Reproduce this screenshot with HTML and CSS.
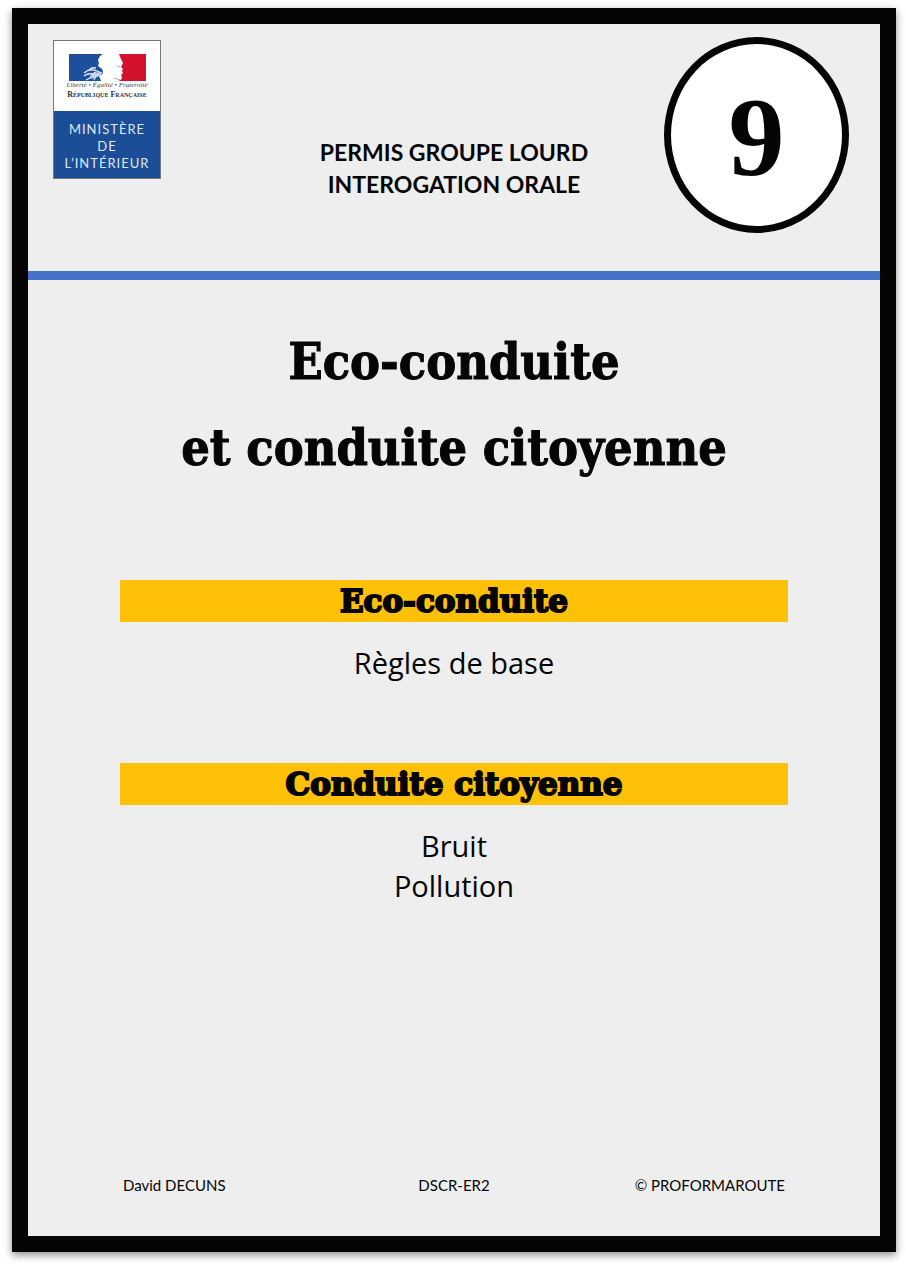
FILE: index.html
```html
<!DOCTYPE html>
<html lang="fr">
<head>
<meta charset="utf-8">
<meta name="viewport" content="width=device-width, initial-scale=1">
<title>Eco-conduite et conduite citoyenne</title>
<link rel="stylesheet" href="styles.css">
</head>
<body>
<article class="sheet">
  <header class="header">
    <div class="logo">
      <div class="republic">
        <svg class="flag" viewBox="0 0 77 27" aria-hidden="true">
          <path fill="#1e4f9c" d="M0 0H34L31 2 29 6 30 9 29 12 33 15 34 18 33 21 30 22 32 27H0Z"/>
          <path fill="#d3122e" d="M50 0H77V27H49Q53 26 53 23L52 21 54 19 53 17 54 15 52 13 54 9 52 5Z"/>
          <path fill="none" stroke="#dfe9f7" stroke-width="1.3" d="M15 19Q19 15 25 16L33 19M20 16Q23 13 27 14M15 22Q19 19 23 20M27 18Q22 20 21 24L17 26M28 20L25 26"/>
          <path fill="#c5d5eb" d="M23 19L31 18 33 21 28 23 22 25Z"/>
          <path fill="none" stroke="#aaa" stroke-width="1" d="M45 24L51 26M48 12L51 13"/>
        </svg>
        <div class="motto">Liberté • Égalité • Fraternité</div>
        <div class="name">République Française</div>
      </div>
      <div class="ministry">MINISTÈRE<br>DE<br>L’INTÉRIEUR</div>
    </div>
    <p class="exam">PERMIS GROUPE LOURD<br>INTEROGATION ORALE</p>
    <div class="number">9</div>
  </header>
  <main class="content">
    <h1 class="title">Eco-conduite<br>et conduite citoyenne</h1>
    <section class="topic">
      <h2 class="band">Eco-conduite</h2>
      <p class="points">Règles de base</p>
    </section>
    <section class="topic">
      <h2 class="band">Conduite citoyenne</h2>
      <p class="points">Bruit<br>Pollution</p>
    </section>
  </main>
  <footer class="footer">
    <span>David DECUNS</span>
    <span class="code">DSCR-ER2</span>
    <span class="owner">© PROFORMAROUTE</span>
  </footer>
</article>
</body>
</html>
```
FILE: styles.css
```css
* { box-sizing: border-box; }
body {
  margin: 0;
  padding: 8px 10px 14px 12px;
  min-height: 100vh;
  display: flex;
  background: #fff;
  color: #050505;
  font-family: Lato, "Liberation Sans", sans-serif;
}
h1, h2, p { margin: 0; }
.sheet {
  flex: 1;
  display: flex;
  flex-direction: column;
  border: 16px solid #050505;
  background: #eee;
  box-shadow: 0 3px 8px rgba(0, 0, 0, .45);
}
.header {
  display: grid;
  grid-template-columns: 1fr auto 1fr;
  align-items: start;
  padding: 13px 31px 38px 25px;
  border-bottom: 9px solid #4673c8;
}
.logo {
  width: 108px;
  margin-top: 3px;
  border: 1px solid #777;
  background: #fff;
  text-align: center;
}
.republic { height: 70px; padding-top: 13px; }
.flag { display: block; width: 77px; height: 27px; margin: 0 auto; }
.motto {
  font: italic 7px/9px "Liberation Serif", serif;
  color: #444;
  white-space: nowrap;
}
.name {
  font: bold 8px/10px "Liberation Serif", serif;
  font-variant: small-caps;
  color: #333;
  white-space: nowrap;
}
.ministry {
  padding: 10px 0 6px;
  background: #1c4d97;
  color: #dfe8f5;
  font-size: 13px;
  line-height: 17px;
  letter-spacing: 1px;
}
.exam {
  padding: 99px 0 0 6px;
  text-align: center;
  font-size: 23px;
  font-weight: bold;
  line-height: 32px;
}
.number {
  justify-self: end;
  display: grid;
  place-items: center;
  width: 185px;
  height: 196px;
  padding-top: 4px;
  border: 7px solid #050505;
  border-radius: 50%;
  background: #fff;
  font: bold 112px/1 "Liberation Serif", serif;
}
.content { flex: 1; padding: 39px 92px; text-align: center; }
.title {
  margin-bottom: 89px;
  font: bold 50px/86px "DejaVu Serif Condensed", "DejaVu Serif", serif;
  white-space: nowrap;
  -webkit-text-stroke: 1px #050505;
}
.topic { margin-bottom: 80px; }
.band {
  background: #ffc107;
  font: bold 31px/42px "DejaVu Serif", serif;
  -webkit-text-stroke: 2px #050505;
}
.points {
  padding-top: 21px;
  font: 29px/40px "Open Sans", sans-serif;
}
.footer {
  display: grid;
  grid-template-columns: 1fr auto 1fr;
  padding: 0 95px 39px;
  font-size: 15px;
  line-height: 24px;
}
.owner { text-align: right; }
```
